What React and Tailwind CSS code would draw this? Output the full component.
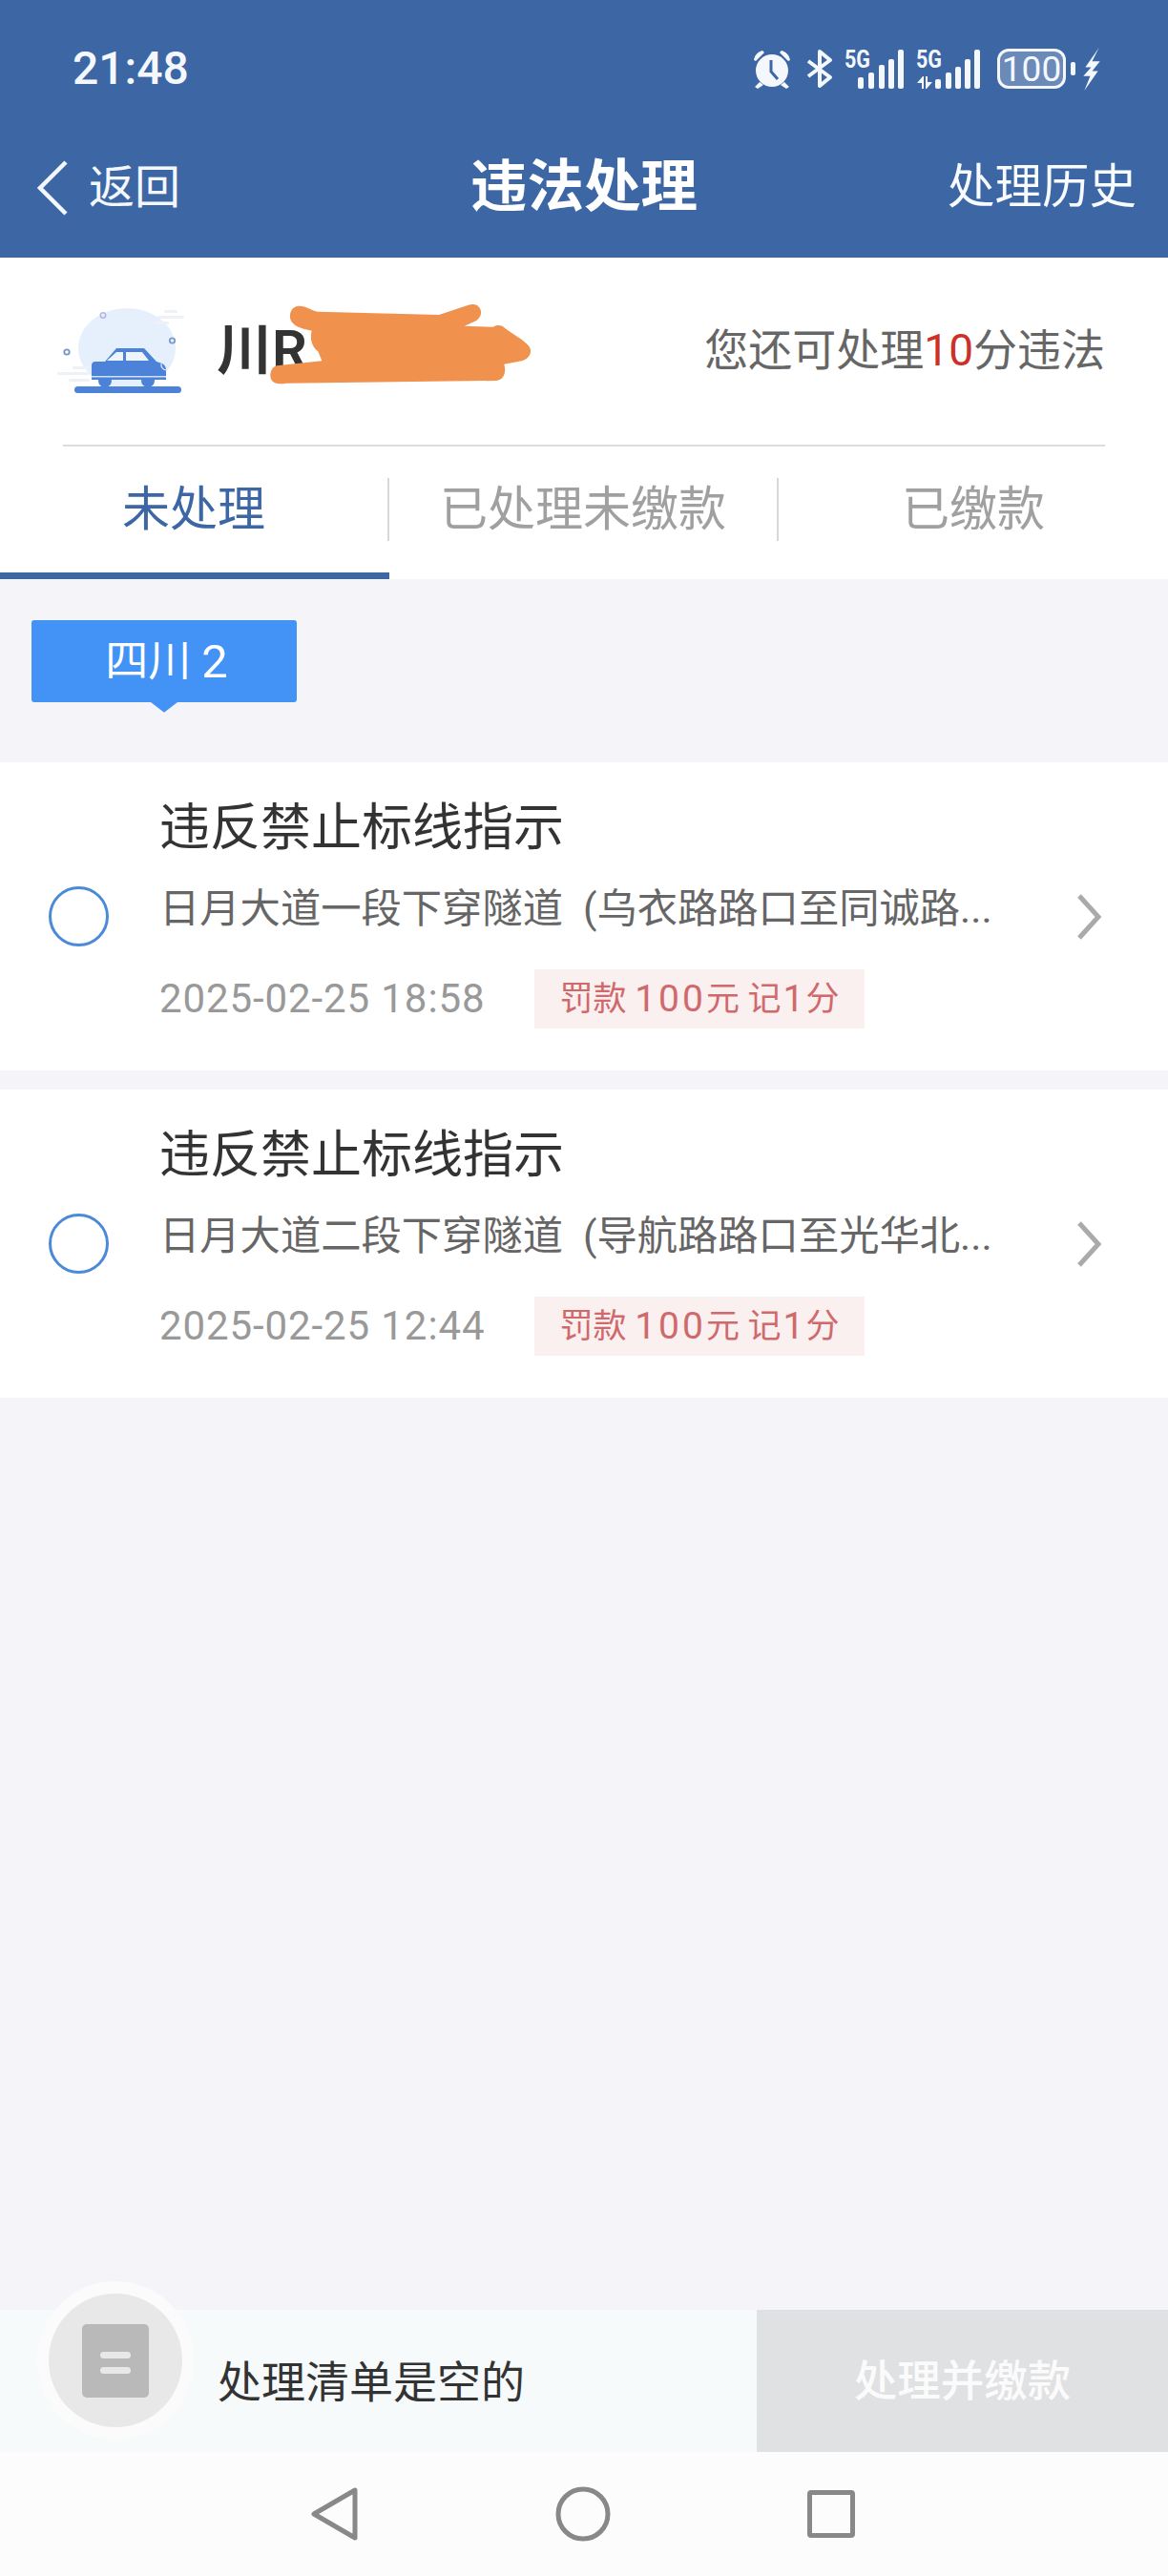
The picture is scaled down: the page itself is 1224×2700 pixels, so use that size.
import React from 'react';

const font = "font-[Roboto,'Noto_Sans_CJK_SC',sans-serif]";

const records = [
  { road: '日月大道一段下穿隧道  (乌衣路路口至同诚路...', time: '2025-02-25 18:58' },
  { road: '日月大道二段下穿隧道  (导航路路口至光华北...', time: '2025-02-25 12:44' },
];

const AlarmIcon = () => (
  <svg width="42" height="42" viewBox="0 0 42 42" className="shrink-0">
    <circle cx="21" cy="23" r="17" fill="#f4f8fd" />
    <path d="M2 12 C3 6 7 3 11 2 L13 4 L4 13 Z M40 12 C39 6 35 3 31 2 L29 4 L38 13 Z" fill="#f4f8fd" />
    <path d="M8 35 L3 40 L6 42 L12 38 Z M34 35 L39 40 L36 42 L30 38 Z" fill="#f4f8fd" />
    <path d="M20 12 V24 L27 32" fill="none" stroke="#3c66a4" strokeWidth="3" />
  </svg>
);

const BluetoothIcon = () => (
  <svg width="28" height="42" viewBox="0 0 28 42" className="shrink-0">
    <path d="M2 13 L25 30 L14 39 V3 L25 12 L2 29" fill="none" stroke="#f4f8fd" strokeWidth="4" strokeLinejoin="round" />
  </svg>
);

const Signal = ({ arrows }) => {
  const bars = arrows
    ? [[20, 32, 10], [31, 25, 17], [41, 19, 23], [51, 11, 31], [61, 1, 41]]
    : [[14, 30, 12], [25, 25, 17], [36, 17, 25], [46, 11, 31], [56, 1, 41]];
  return (
    <svg width={arrows ? 67 : 62} height="54" viewBox={arrows ? '0 -12 67 54' : '0 -12 62 54'} className="shrink-0 -mt-[12px]">
      <text x="0" y="20" fontFamily="Roboto" fontWeight="700" fontSize="26" fill="#f4f8fd" textLength="27" lengthAdjust="spacingAndGlyphs">5G</text>
      {arrows && <path d="M7 29 L1 36 H6 V42 H8 V29 Z M11 42 L17 35 H12 V29 H10 V42 Z" fill="#f4f8fd" />}
      {bars.map(([x, y, h]) => (
        <rect key={x} x={x} y={y} width="6" height={h} rx="2" fill="#f4f8fd" />
      ))}
    </svg>
  );
};

const Battery = () => (
  <div className="flex items-center shrink-0">
    <div className="w-[72px] h-[42px] rounded-[12px] border-[3px] border-[#f4f8fd] bg-[#6b8ab8] flex items-center justify-center text-[37px] leading-none text-[#f4f8fd]">
      100
    </div>
    <div className="ml-[5px] w-[5px] h-[14px] rounded-[2px] bg-[#f4f8fd]" />
  </div>
);

const BoltIcon = () => (
  <svg width="18" height="45" viewBox="0 0 17 44" className="shrink-0">
    <path d="M16 0 L2 20 H8 L0 29 H7 L1 44 L15 24 H9 L17 14 H9 Z" fill="#f4f8fd" />
  </svg>
);

const CarIcon = () => (
  <svg width="160" height="110" viewBox="0 0 160 110" className="shrink-0">
    <ellipse cx="83" cy="55" rx="51" ry="42" fill="#e6f0fd" />
    <g fill="#eef2f6">
      <rect x="115" y="21" width="28" height="3" rx="1.5" />
      <rect x="112" y="27" width="15" height="3" rx="1.5" />
      <rect x="122" y="15" width="14" height="3" rx="1.5" />
      <rect x="10" y="80" width="34" height="3" rx="1.5" />
      <rect x="26" y="74" width="18" height="3" rx="1.5" />
      <rect x="22" y="87" width="22" height="3" rx="1.5" />
    </g>
    <circle cx="58" cy="20.5" r="2.7" fill="none" stroke="#b8b6df" strokeWidth="1.6" />
    <circle cx="130.5" cy="47" r="2.7" fill="none" stroke="#7a9cc8" strokeWidth="1.8" />
    <circle cx="20" cy="59" r="2.7" fill="none" stroke="#7a94c4" strokeWidth="1.8" />
    <rect x="28" y="95" width="112" height="7" rx="3.5" fill="#4c82d8" />
    <circle cx="60" cy="89" r="7" fill="#4c82d8" />
    <circle cx="105" cy="89" r="7" fill="#4c82d8" />
    <path d="M60 69 L72 55 H101 L114 69 L120 71 Q124 73 124 78 V88 H46 V73 Q46 69 50 69 Z" fill="#4c82d8" />
    <path d="M62 68 L72 59 H79 V68 Z M82 59 H99 L106 68 H82 Z" fill="#eef4fc" />
    <rect x="46" y="84" width="78" height="1.5" fill="#cfe0f7" />
    <path d="M119 71 A6 6 0 0 0 124 78" fill="none" stroke="#dfeafa" strokeWidth="1.2" />
  </svg>
);

const Redaction = () => (
  <svg width="380" height="120" viewBox="0 0 1140 360" className="absolute left-[200px] top-[30px]">
    <path
      d="M340 62 C320 62 310 80 312 100 C316 125 350 135 380 140 C372 170 385 195 400 205 L412 235 L270 250 C250 255 245 285 255 297 C265 310 285 307 300 305 L960 297 C985 295 992 270 985 245 L1040 235 C1070 225 1075 200 1060 185 C1040 165 1010 150 985 130 C975 120 960 122 950 128 L860 125 L890 112 C915 100 920 75 900 60 C890 55 880 57 870 60 L780 90 L400 80 C380 78 365 62 340 62 Z"
      fill="#f0914d"
    />
  </svg>
);

const Tab = ({ label, active, divider }) => (
  <div className={`w-[408px] h-[139px] flex items-center border-b-[7px] ${active ? 'border-[#3c66a4]' : 'border-transparent'}`}>
    <div className={`flex-1 text-center text-[50px] leading-none ${active ? 'text-[#3c66a4]' : 'text-[#a0a0a0]'}`}>{label}</div>
    {divider && <div className="w-[2px] h-[66px] bg-[#d8d8d8]" />}
  </div>
);

const RecordCard = ({ road, time }) => (
  <div className="h-[323px] bg-white flex items-center pl-[51px] pr-[69px]">
    <div className="w-[63px] h-[63px] rounded-full border-[3px] border-[#4a8ad8] shrink-0" />
    <div className="ml-[53px] flex-1 min-w-0 self-start pt-[34px]">
      <div className="h-[70px] flex items-center text-[53px] leading-none text-[#333333]">违反禁止标线指示</div>
      <div className="mt-[20px] h-[60px] flex items-center text-[42.3px] leading-none text-[#666666] whitespace-pre">{road}</div>
      <div className="mt-[33px] h-[62px] flex items-center">
        <span className="w-[393px] text-[42px] leading-none tracking-[0.9px] text-[#999999]">{time}</span>
        <span className="w-[346px] h-[62px] bg-[#fbf0f0] flex items-center justify-center text-[35px] leading-none text-[#d0696b] whitespace-pre">
          罚款 <span className="text-[39px] tracking-[3px]">100</span>元 记<span className="text-[39px] mx-[2px]">1</span>分
        </span>
      </div>
    </div>
    <svg width="28" height="50" viewBox="0 0 28 50" className="shrink-0">
      <path d="M4 3 L24 25 L4 47" fill="none" stroke="#aaaaaa" strokeWidth="5" />
    </svg>
  </div>
);

export default function App() {
  return (
    <div className={`w-[1224px] h-[2700px] flex flex-col bg-[#f4f4f9] overflow-hidden ${font}`}>
      {/* Header */}
      <header className="h-[270px] shrink-0 bg-[#3c66a4] text-white pt-[48px]">
        <div className="h-[48px] flex items-center justify-between pl-[76px] pr-[71px]">
          <span className="text-[48px] leading-none font-medium text-[#f4f8fd]">21:48</span>
          <div className="flex items-center">
            <AlarmIcon />
            <div className="ml-[15px]"><BluetoothIcon /></div>
            <div className="ml-[12px]"><Signal /></div>
            <div className="ml-[13px]"><Signal arrows /></div>
            <div className="ml-[18px]"><Battery /></div>
            <div className="ml-[8px]"><BoltIcon /></div>
          </div>
        </div>
        <div className="mt-[56px] h-[90px] grid grid-cols-[1fr_auto_1fr] items-center">
          <div className="flex items-center pl-[38px]">
            <svg width="34" height="58" viewBox="0 0 34 58">
              <path d="M31 2 L4 29 L31 56" fill="none" stroke="#f4f8fd" strokeWidth="4.5" />
            </svg>
            <span className="ml-[21px] text-[48px] leading-none text-[#f4f8fd]">返回</span>
          </div>
          <div className="text-[59.5px] leading-none font-bold">违法处理</div>
          <div className="text-right pr-[33px] text-[49.5px] leading-none text-[#f8fbff]">处理历史</div>
        </div>
      </header>

      {/* Plate and tabs */}
      <section className="shrink-0 bg-white relative">
        <div className="h-[196px] flex items-start pl-[50px] pr-[66px] pt-[40px]">
          <CarIcon />
          <div className="ml-[17px] mt-[22px] text-[58px] leading-[70px] font-semibold text-[#333333]">川R</div>
          <div className="ml-auto mt-[22px] h-[70px] flex items-center text-[46px] leading-none text-[#666666]">
            您还可处理<span className="text-[#cc3028]">10</span>分违法
          </div>
        </div>
        <Redaction />
        <div className="mx-[66px] h-[2px] bg-[#dcdcdc]" />
        <div className="flex">
          <Tab label="未处理" active divider />
          <Tab label="已处理未缴款" divider />
          <Tab label="已缴款" />
        </div>
      </section>

      {/* Province tag */}
      <div className="shrink-0 h-[192px] pt-[43px] pl-[33px]">
        <div className="relative w-[278px] h-[86px] pl-[5px] rounded-[3px] bg-[#4393f6] flex items-center justify-center text-[45px] leading-none text-white whitespace-pre">
          四川 <span className="text-[49px]">2</span>
          <svg width="28" height="11" viewBox="0 0 28 11" className="absolute left-[125px] top-[86px]">
            <path d="M0 0 H28 L15 10 Q14 11 13 10 Z" fill="#4393f6" />
          </svg>
        </div>
      </div>

      {/* Records */}
      <div className="flex flex-col gap-[20px] shrink-0">
        {records.map(r => (
          <RecordCard key={r.road} road={r.road} time={r.time} />
        ))}
      </div>

      <div className="flex-1" />

      {/* Bottom bar */}
      <div className="relative h-[149px] shrink-0 bg-[#f6fafb] flex items-stretch">
        <div className="absolute left-[39px] top-[-30px] w-[164px] h-[166px] rounded-full bg-[#fbfbfb] flex items-center justify-center">
          <div className="w-[140px] h-[140px] rounded-full bg-[#e8e8e8] flex items-center justify-center">
            <div className="w-[70px] h-[77px] rounded-[5px] bg-[#b9b9b9] flex flex-col items-center justify-center gap-[9px] pt-[5px]">
              <div className="w-[32px] h-[7px] rounded-full bg-[#e8e8e8]" />
              <div className="w-[32px] h-[7px] rounded-full bg-[#e8e8e8]" />
            </div>
          </div>
        </div>
        <div className="flex-1 flex items-center pl-[228px] pt-[3px] text-[46px] leading-none text-[#333333]">处理清单是空的</div>
        <div className="w-[431px] bg-[#e0e1e3] flex items-center justify-center pt-[3px] text-[45.5px] leading-none font-medium text-[#fbfbfb]">处理并缴款</div>
      </div>

      {/* Android nav */}
      <nav className="h-[130px] shrink-0 bg-[#fcfcfc] flex items-center pl-[325px]">
        <svg width="52" height="58" viewBox="0 0 52 58" className="shrink-0">
          <path d="M47 4 V54 L4 29 Z" fill="none" stroke="#888888" strokeWidth="5" strokeLinejoin="round" />
        </svg>
        <svg width="58" height="58" viewBox="0 0 58 58" className="ml-[205px] shrink-0">
          <circle cx="29" cy="29" r="26" fill="none" stroke="#888888" strokeWidth="5" />
        </svg>
        <div className="ml-[206px] w-[50px] h-[50px] rounded-[4px] border-[5px] border-[#888888]" />
      </nav>
    </div>
  );
}
